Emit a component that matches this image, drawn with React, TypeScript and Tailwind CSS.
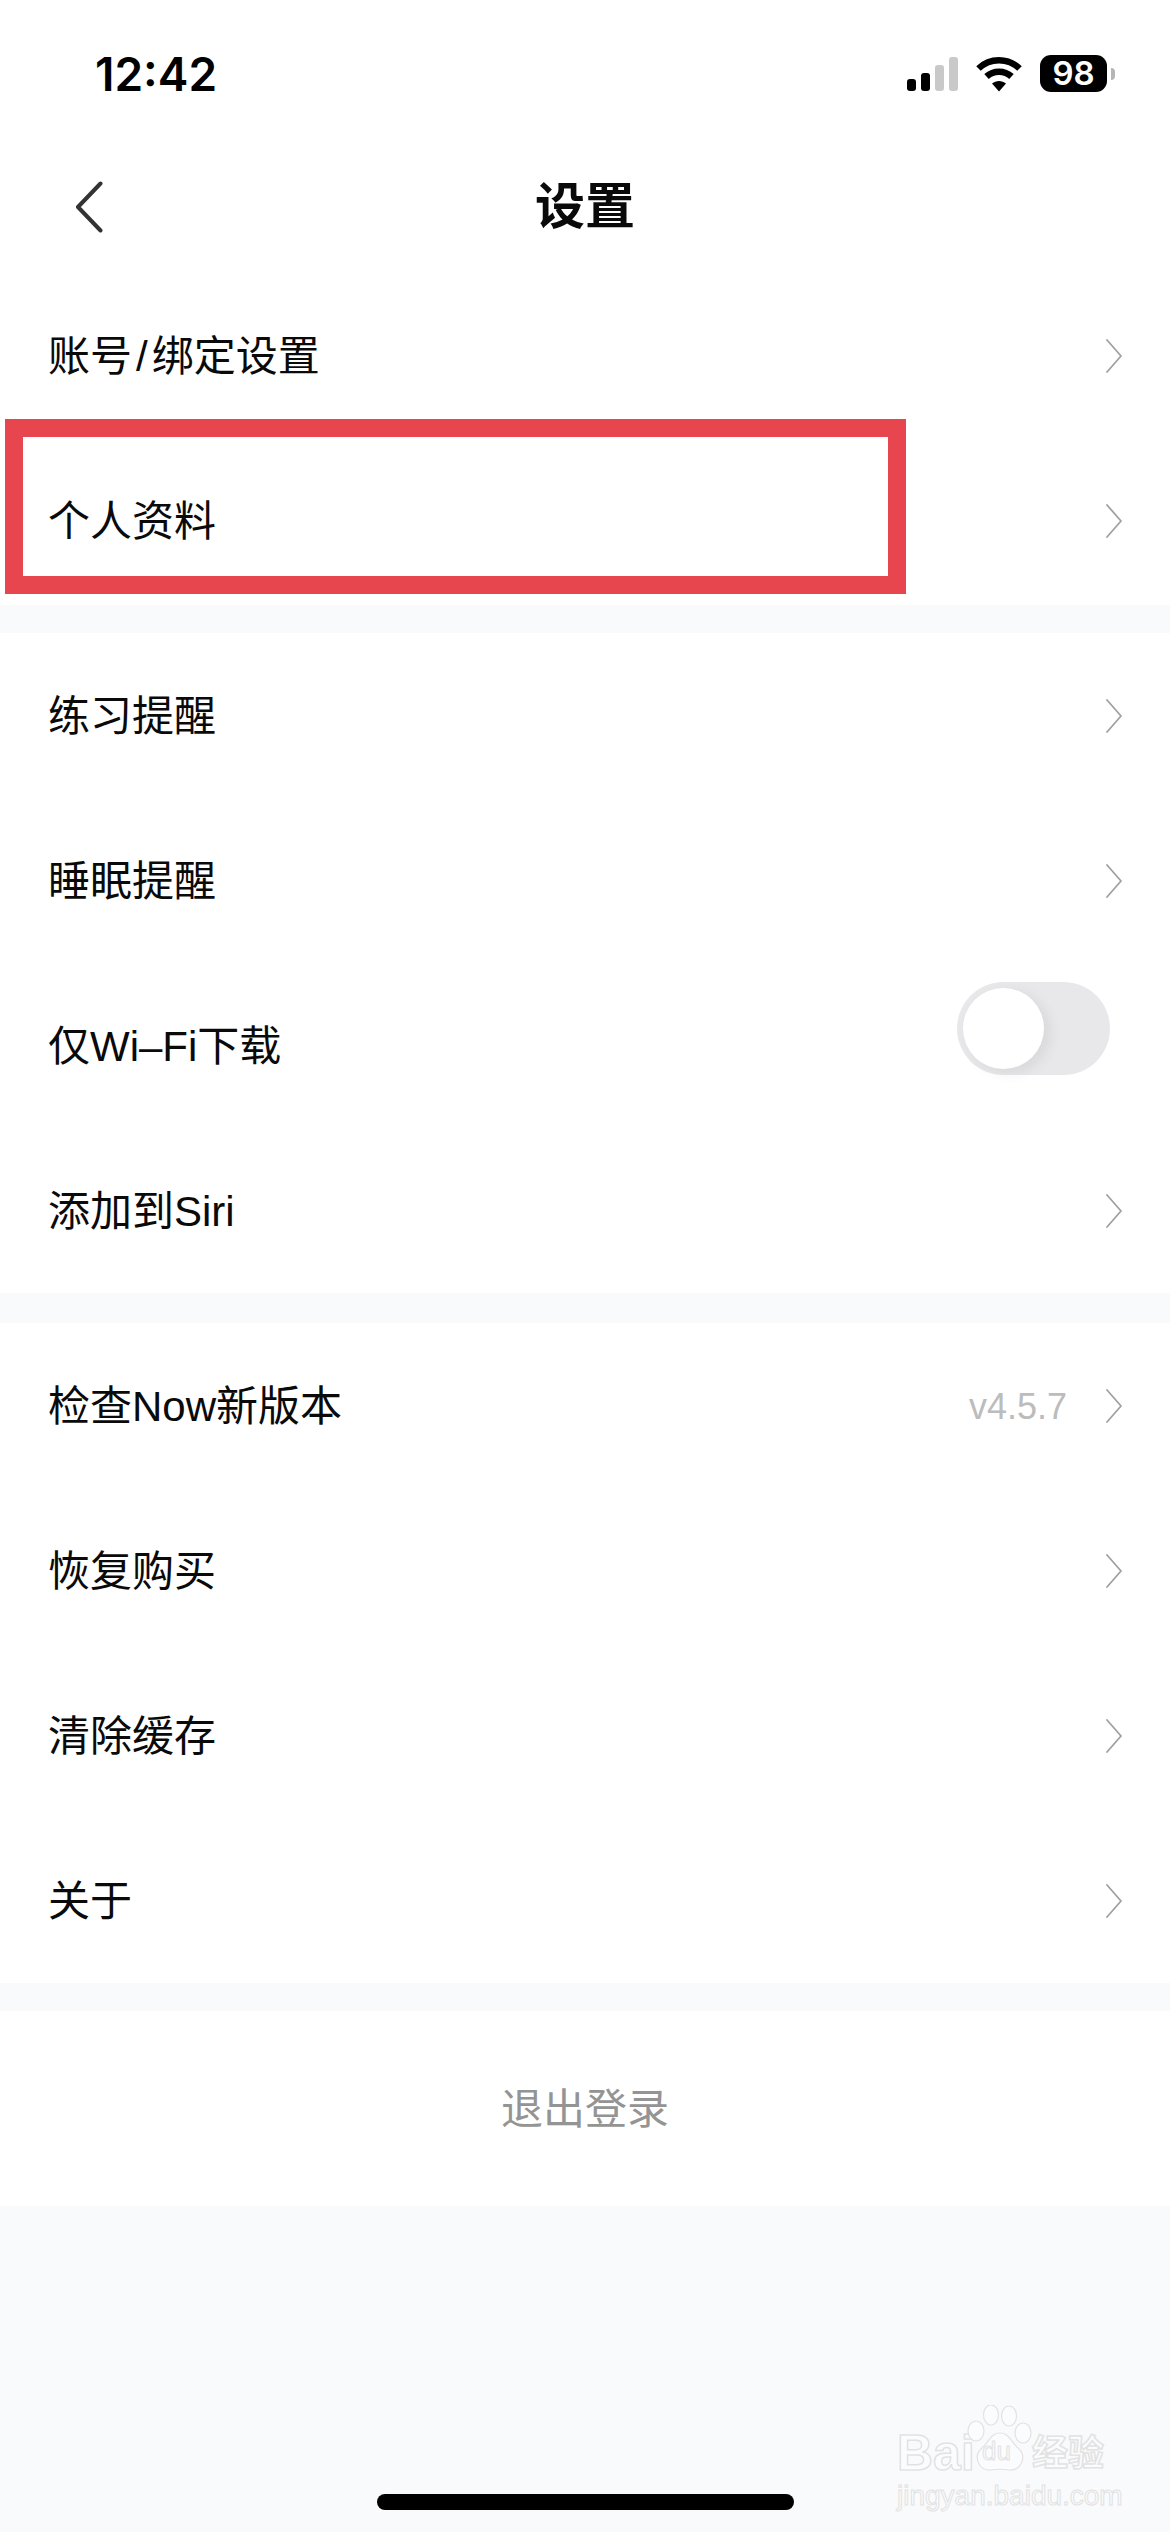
import type { ReactNode } from "react";

const cjk = "font-['Liberation_Sans','Noto_Sans_CJK_SC',sans-serif]";

function Chevron() {
  return (
    <svg width="16" height="34" viewBox="0 0 16 34" fill="none" className="shrink-0">
      <path d="M1 1 L15 17 L1 33" stroke="#a0a0a0" strokeWidth="1.8" strokeLinecap="round" strokeLinejoin="round" />
    </svg>
  );
}

function Row({ label, children }: { label: ReactNode; children?: ReactNode }) {
  return (
    <div className="flex h-[165px] items-center justify-between pl-[48px] pr-[48px]">
      <span className="pt-[2px] text-[42px] leading-[56px] text-[#0a0a0a]">{label}</span>
      {children ?? <Chevron />}
    </div>
  );
}

function Toggle() {
  return (
    <div className="mb-[35px] mr-[12px] flex h-[93px] w-[153px] items-center rounded-full bg-[#e8e8ea] pl-[6px]">
      <div className="h-[81px] w-[81px] rounded-full bg-white shadow-[6px_4px_14px_rgba(0,0,0,0.07)]" />
    </div>
  );
}

function StatusIcons() {
  return (
    <div className="flex items-center">
      <div className="flex h-[34px] items-end gap-[5px]">
        <div className="h-[12px] w-[9px] rounded-[3px] bg-black" />
        <div className="h-[18px] w-[9px] rounded-[3px] bg-black" />
        <div className="h-[26px] w-[9px] rounded-[3px] bg-[#c9c9c9]" />
        <div className="h-[34px] w-[9px] rounded-[3px] bg-[#c9c9c9]" />
      </div>
      <svg width="48" height="36" viewBox="0 0 48 36" className="ml-[17px]">
        <path d="M3.5 12.5 C15 1.5 33 1.5 44.5 12.5" fill="none" stroke="#000" strokeWidth="6.5" strokeLinecap="butt" />
        <path d="M11.5 20.5 C18.5 14 29.5 14 36.5 20.5" fill="none" stroke="#000" strokeWidth="6.5" strokeLinecap="butt" />
        <path d="M17 27.5 C21 24 27 24 31 27.5 L24 35.5 Z" fill="#000" />
      </svg>
      <div className="ml-[17px] flex h-[37px] w-[67px] items-center justify-center rounded-[11px] bg-black font-['Inter',sans-serif] text-[33px] leading-none font-semibold text-white">
        98
      </div>
      <div className="ml-[4px] h-[12px] w-[4px] rounded-r-full bg-[#b5b5b5]" />
    </div>
  );
}

function Watermark() {
  const outline = "text-[#fbfcfd] [-webkit-text-stroke:1.5px_#e2e2e2]";
  return (
    <div className="absolute left-[895px] top-[2405px] h-[110px] w-[220px] font-['Liberation_Sans','Noto_Sans_CJK_SC',sans-serif]">
      <span className={`absolute left-[2px] top-[23px] text-[50px] leading-[50px] font-bold ${outline}`}>Bai</span>
      <svg width="66" height="68" viewBox="0 0 66 68" className="absolute left-[72px] top-0" fill="#fbfcfd" stroke="#e2e2e2" strokeWidth="1.2">
        <ellipse cx="9" cy="26" rx="8" ry="10" />
        <ellipse cx="24" cy="10" rx="7.5" ry="10" />
        <ellipse cx="42" cy="11" rx="7.5" ry="10" />
        <ellipse cx="56" cy="28" rx="8" ry="10" />
        <path d="M33 28 C43 28 44 38 52 44 C60 52 54 66 42 65 C36 64 30 64 24 65 C12 66 6 52 14 44 C22 38 23 28 33 28 Z" />
      </svg>
      <span className="absolute left-[87px] top-[33px] text-[26px] leading-[26px] text-[#fbfcfd] [-webkit-text-stroke:1px_#e2e2e2]">du</span>
      <span className={`absolute left-[137px] top-[28px] text-[36px] leading-[42px] font-bold ${outline}`}>经验</span>
      <span className="absolute left-[2px] top-[76px] text-[28px] leading-[30px] text-[#fbfcfd] [-webkit-text-stroke:1px_#e2e2e2]">jingyan.baidu.com</span>
    </div>
  );
}

export default function App() {
  return (
    <div className={`relative flex h-[2532px] w-[1170px] flex-col overflow-hidden bg-[#f9fafc] ${cjk}`}>
      <div className="bg-white">
        {/* status bar */}
        <div className="flex h-[148px] items-center justify-between pb-[1px] pl-[95px] pr-[55px]">
          <span className="font-['Inter',sans-serif] text-[46px] leading-none font-semibold text-black">12:42</span>
          <StatusIcons />
        </div>

        {/* nav */}
        <div className="relative flex h-[125px] items-start justify-center">
          <span className="mt-[26px] text-[50px] leading-[66px] font-bold text-[#0a0a0a]">设置</span>
          <svg width="28" height="52" viewBox="0 0 28 52" fill="none" className="absolute left-[75px] top-[33px]">
            <path d="M25.5 2.5 L3 26 L25.5 49.5" stroke="#333" strokeWidth="4" strokeLinecap="round" strokeLinejoin="round" />
          </svg>
        </div>

        <Row label={<>账号<span className="mx-[4px]">/</span>绑定设置</>} />
        <Row label="个人资料" />
        <div className="h-[2px]" />
      </div>

      <div className="mt-[28px] bg-white">
        <Row label="练习提醒" />
        <Row label="睡眠提醒" />
        <Row label="仅Wi–Fi下载">
          <Toggle />
        </Row>
        <Row label="添加到Siri" />
      </div>

      <div className="mt-[30px] bg-white">
        <Row label="检查Now新版本">
          <div className="flex items-center">
            <span className="mr-[39px] pt-[3px] text-[36px] leading-none text-[#bcbcbc]">v4.5.7</span>
            <Chevron />
          </div>
        </Row>
        <Row label="恢复购买" />
        <Row label="清除缓存" />
        <Row label="关于" />
      </div>

      <div className="mt-[28px] flex h-[195px] items-center justify-center bg-white">
        <span className="pt-[2px] text-[42px] leading-[56px] text-[#949494]">退出登录</span>
      </div>

      {/* annotation box */}
      <div className="absolute left-[5px] top-[419px] h-[175px] w-[901px] border-[18px] border-[#e8464f]" />

      <Watermark />

      {/* home indicator */}
      <div className="absolute bottom-[22px] left-[377px] h-[16px] w-[417px] rounded-[8px] bg-black" />
    </div>
  );
}
